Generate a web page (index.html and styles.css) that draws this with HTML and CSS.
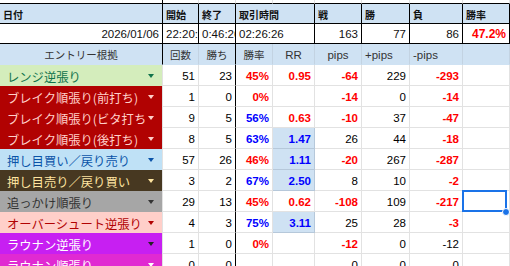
FILE: index.html
```html
<!DOCTYPE html>
<html lang="ja">
<head>
<meta charset="utf-8">
<link rel="stylesheet" href="styles.css">
</head>
<body>
<div class="sheet">
  <!-- top strip -->
  <div class="c strip"></div><div class="c strip"></div><div class="c strip"></div><div class="c strip"></div><div class="c strip"></div><div class="c strip"></div><div class="c strip"></div><div class="c strip"></div><div class="c strip"></div>

  <!-- header -->
  <div class="c hd">日付</div>
  <div class="c hd">開始</div>
  <div class="c hd">終了</div>
  <div class="c hd span2">取引時間</div>
  <div class="c hd">戦</div>
  <div class="c hd">勝</div>
  <div class="c hd">負</div>
  <div class="c hd">勝率</div>

  <!-- date row -->
  <div class="c dt r">2026/01/06</div>
  <div class="c dt">22:20:00</div>
  <div class="c dt">0:46:26</div>
  <div class="c dt span2">02:26:26</div>
  <div class="c dt r">163</div>
  <div class="c dt r">77</div>
  <div class="c dt r">86</div>
  <div class="c dt r red b big">47.2%</div>

  <!-- entry header -->
  <div class="c eh ctr first">エントリー根拠</div>
  <div class="c eh ctr">回数</div>
  <div class="c eh ctr">勝ち</div>
  <div class="c eh ctr">勝率</div>
  <div class="c eh ctr lat">RR</div>
  <div class="c eh ctr lat">pips</div>
  <div class="c eh lat">+pips</div>
  <div class="c eh lat">-pips</div>
  <div class="c eh"></div>

  <!-- rows -->
  <div class="c chip green"><span class="t">レンジ逆張り</span><span class="arr"></span></div>
  <div class="c r">51</div><div class="c r">23</div><div class="c r red b">45%</div><div class="c r red b">0.95</div><div class="c r red b">-64</div><div class="c r">229</div><div class="c r red b">-293</div><div class="c"></div>

  <div class="c chip dred"><span class="t">ブレイク順張り(前打ち)</span><span class="arr"></span></div>
  <div class="c r">1</div><div class="c r">0</div><div class="c r red b">0%</div><div class="c r"></div><div class="c r red b">-14</div><div class="c r">0</div><div class="c r red b">-14</div><div class="c"></div>

  <div class="c chip dred"><span class="t">ブレイク順張り(ビタ打ち)</span><span class="arr"></span></div>
  <div class="c r">9</div><div class="c r">5</div><div class="c r blue b">56%</div><div class="c r red b">0.63</div><div class="c r red b">-10</div><div class="c r">37</div><div class="c r red b">-47</div><div class="c"></div>

  <div class="c chip dred"><span class="t">ブレイク順張り(後打ち)</span><span class="arr"></span></div>
  <div class="c r">8</div><div class="c r">5</div><div class="c r blue b">63%</div><div class="c r blue b hl">1.47</div><div class="c r">26</div><div class="c r">44</div><div class="c r red b">-18</div><div class="c"></div>

  <div class="c chip lblue"><span class="t">押し目買い／戻り売り</span><span class="arr"></span></div>
  <div class="c r">57</div><div class="c r">26</div><div class="c r red b">46%</div><div class="c r blue b hl">1.11</div><div class="c r red b">-20</div><div class="c r">267</div><div class="c r red b">-287</div><div class="c"></div>

  <div class="c chip brown"><span class="t">押し目売り／戻り買い</span><span class="arr"></span></div>
  <div class="c r">3</div><div class="c r">2</div><div class="c r blue b">67%</div><div class="c r blue b hl">2.50</div><div class="c r">8</div><div class="c r">10</div><div class="c r red b">-2</div><div class="c"></div>

  <div class="c chip grey"><span class="t">追っかけ順張り</span><span class="arr"></span></div>
  <div class="c r">29</div><div class="c r">13</div><div class="c r red b">45%</div><div class="c r red b">0.62</div><div class="c r red b">-108</div><div class="c r">109</div><div class="c r red b">-217</div><div class="c sel"></div>

  <div class="c chip pink"><span class="t">オーバーシュート逆張り</span><span class="arr"></span></div>
  <div class="c r">4</div><div class="c r">3</div><div class="c r blue b">75%</div><div class="c r blue b hl">3.11</div><div class="c r">25</div><div class="c r">28</div><div class="c r red b">-3</div><div class="c"></div>

  <div class="c chip purple"><span class="t">ラウナン逆張り</span><span class="arr"></span></div>
  <div class="c r">1</div><div class="c r">0</div><div class="c r red b">0%</div><div class="c r"></div><div class="c r red b">-12</div><div class="c r">0</div><div class="c r">-12</div><div class="c"></div>

  <div class="c chip magenta"><span class="t">ラウナン順張り</span><span class="arr"></span></div>
  <div class="c r">0</div><div class="c r">0</div><div class="c r"></div><div class="c r"></div><div class="c r">0</div><div class="c r">0</div><div class="c r">0</div><div class="c"></div>
</div>
</body>
</html>
```

FILE: styles.css
```css
html, body {
  margin: 0;
  padding: 0;
  background: #fff;
  overflow: hidden;
}

.sheet {
  display: grid;
  grid-template-columns: 163px 36px 37px 37px 42px 47px 48px 53px 47px;
  grid-template-rows: 4px 20px 20px 21px repeat(10, 21px);
  width: 510px;
  font-family: "Liberation Sans", Arial, "Noto Sans CJK JP", sans-serif;
  font-size: 11.5px;
  color: #000;
}

.c {
  box-sizing: border-box;
  display: flex;
  align-items: center;
  padding: 1px 3px 0 3px;
  border-right: 1px solid #e2e2e2;
  border-bottom: 1px solid #e2e2e2;
  overflow: hidden;
  white-space: nowrap;
  min-width: 0;
}

.c:nth-child(9n+1) {
  border-right-color: #000;
}

.r { justify-content: flex-end; }
.ctr { justify-content: center; }
.b { font-weight: bold; }
.span2 { grid-column: span 2; }

.strip {
  padding: 0;
  border-bottom: 1px solid #000;
}

.hd {
  background: #cfe2f3;
  font-family: "Noto Sans CJK JP", sans-serif;
  font-weight: bold;
  font-size: 10px;
  border-right: 1px solid #000;
  border-bottom: 1px solid #000;
  color: #111;
}

.dt {
  border-right: 1px solid #000;
  border-bottom: 1px solid #000;
  color: #111;
}
.big { font-size: 12px; }

.eh {
  background: #cfe2f3;
  border-right-color: #c3d3e2;
  border-bottom-color: #cfe2f3;
  font-family: "Noto Sans CJK JP", sans-serif;
  font-size: 10.5px;
  color: #333;
}
.eh.first { border-right-color: #000; }
.eh.lat {
  font-family: "Liberation Sans", Arial, sans-serif;
  font-size: 11.5px;
}

.hl {
  background: #cfe2f3;
  border-right-color: #b6c8da;
  border-bottom-color: #b6c8da;
}

.c.red { color: #ff0000; }
.c.blue { color: #0000ff; }

.chip {
  font-family: "Noto Sans CJK JP", sans-serif;
  font-size: 12.3px;
  padding: 2px 8px 0 7px;
  border-bottom: 0;
  gap: 2px;
}
.chip .t {
  flex: 1;
  min-width: 0;
  overflow: hidden;
}
.chip .arr {
  flex: none;
  width: 0;
  height: 0;
  border-left: 3.5px solid transparent;
  border-right: 3.5px solid transparent;
  border-top: 4px solid currentColor;
  margin-top: -1px;
}

.green { background: #d4edbc; color: #11734b; }
.dred { background: #b10202; color: #ffcfc9; }
.lblue { background: #bfe1f6; color: #0a53a8; }
.brown { background: #473821; color: #ffe5a0; }
.grey { background: #a6a6a6; color: #333; }
.pink { background: #ffcfc9; color: #b10202; }
.purple { background: #c71ff2; color: #fff; }
.purple .arr { border-top-color: #222; }
.magenta { background: #e02ad2; color: #fff; }

.sel {
  position: relative;
  overflow: visible;
}
.sel::before {
  content: "";
  position: absolute;
  left: -1px;
  top: -1px;
  right: 2px;
  bottom: -1px;
  border: 2px solid #1a73e8;
}
.sel::after {
  content: "";
  position: absolute;
  right: -1px;
  bottom: -5px;
  width: 8px;
  height: 8px;
  border-radius: 50%;
  background: #1a73e8;
  border: 1px solid #fff;
  box-sizing: border-box;
}
```
